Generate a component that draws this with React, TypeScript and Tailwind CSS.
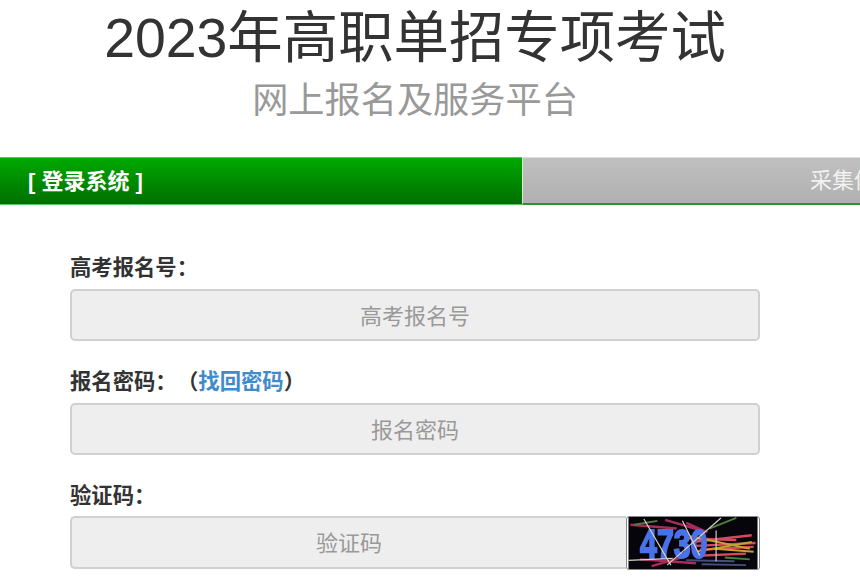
const font = "font-['Liberation_Sans','Noto_Sans_CJK_SC',sans-serif]"

function Captcha() {
  return (
    <svg width="134" height="54" viewBox="0 0 134 54" className="shrink-0 rounded-[3px] border border-[#888] blur-[0.4px]">
      <rect width="134" height="54" fill="#05050b" />
      <path d="M66 26L128 19M70 30L132 27M74 34L130 31M78 40L122 38M60 22L112 24" stroke="#d8485f" strokeWidth="2.5" />
      <path d="M64 20L126 33M70 36L128 26M90 33L130 36" stroke="#c9a030" strokeWidth="2" />
      <path d="M2 8L50 12M38 3L76 14M12 44L70 48M24 51L62 40M60 6L82 16" stroke="#a82c58" strokeWidth="2.5" />
      <path d="M60 45L110 46M76 49L122 50" stroke="#45507a" strokeWidth="2" />
      <path d="M84 12L112 1M6 8L30 4M100 42L126 44" stroke="#4f7f3c" strokeWidth="2" />
      <text x="12" y="43" fontFamily="Liberation Sans" fontWeight="700" fontSize="43" fill="#4a72e8" stroke="#4a72e8" strokeWidth="2" textLength="70" lengthAdjust="spacingAndGlyphs">4730</text>
      <path d="M16 2L44 50M40 50L96 1M0 45L46 43M91 14V46M56 4L74 40" stroke="#d9d2c8" strokeWidth="1.2" fill="none" />
    </svg>
  )
}

function Field({ placeholder }: { placeholder: string }) {
  return (
    <input
      readOnly
      placeholder={placeholder}
      className="h-[52px] w-full rounded-[5px] border-2 border-[#d0d0d0] bg-[#eeeeee] pt-[3px] text-center text-[22px] text-[#333] outline-none placeholder:text-[#999]"
    />
  )
}

export default function App() {
  return (
    <div className={`h-[577px] w-[860px] overflow-hidden bg-white ${font}`}>
      <div className="w-[830px] pt-[8px] text-center">
        <h1 className="whitespace-nowrap text-[55.4px] leading-[60px] font-normal text-[#333]">2023年高职单招专项考试</h1>
        <h2 className="mt-[11px] text-[36.2px] leading-[44px] font-normal text-[#999]">网上报名及服务平台</h2>
      </div>

      <div className="mt-[34px] flex h-[48px] w-[1044px]">
        <div className="flex w-[522px] items-center border-y border-[#5cc45c] bg-gradient-to-b from-[#00a900] to-[#006f00] pl-[28px] text-[22px] font-bold text-white">
          [ 登录系统 ]
        </div>
        <div className="flex w-[522px] items-center border-t border-l border-b-2 border-t-[#ddd] border-l-[#d8ecd0] border-b-[#2f8f2f] bg-gradient-to-b from-[#c0c0c0] to-[#b0b0b0] pl-[287px] text-[22px] text-[#f2f2f2]">
          采集信息
        </div>
      </div>

      <form className="ml-[70px] mt-[48px] w-[690px]">
        <label className="mb-[6px] block text-[21.33px] leading-[30px] font-bold text-[#333]">高考报名号：</label>
        <Field placeholder="高考报名号" />
        <label className="mb-[6px] mt-[26px] block text-[21.33px] leading-[30px] font-bold text-[#333]">
          报名密码：<span className="ml-[11px]">（</span><a className="text-[#428bca]">找回密码</a>）
        </label>
        <Field placeholder="报名密码" />
        <label className="mb-[5px] mt-[26px] block text-[21.33px] leading-[30px] font-bold text-[#333]">验证码：</label>
        <div className="flex items-start">
          <input
            readOnly
            placeholder="验证码"
            className="h-[53px] min-w-0 flex-1 rounded-l-[5px] border-2 border-r-0 border-[#d0d0d0] bg-[#eeeeee] pt-[3px] text-center text-[22px] outline-none placeholder:text-[#999]"
          />
          <Captcha />
        </div>
      </form>
    </div>
  )
}
